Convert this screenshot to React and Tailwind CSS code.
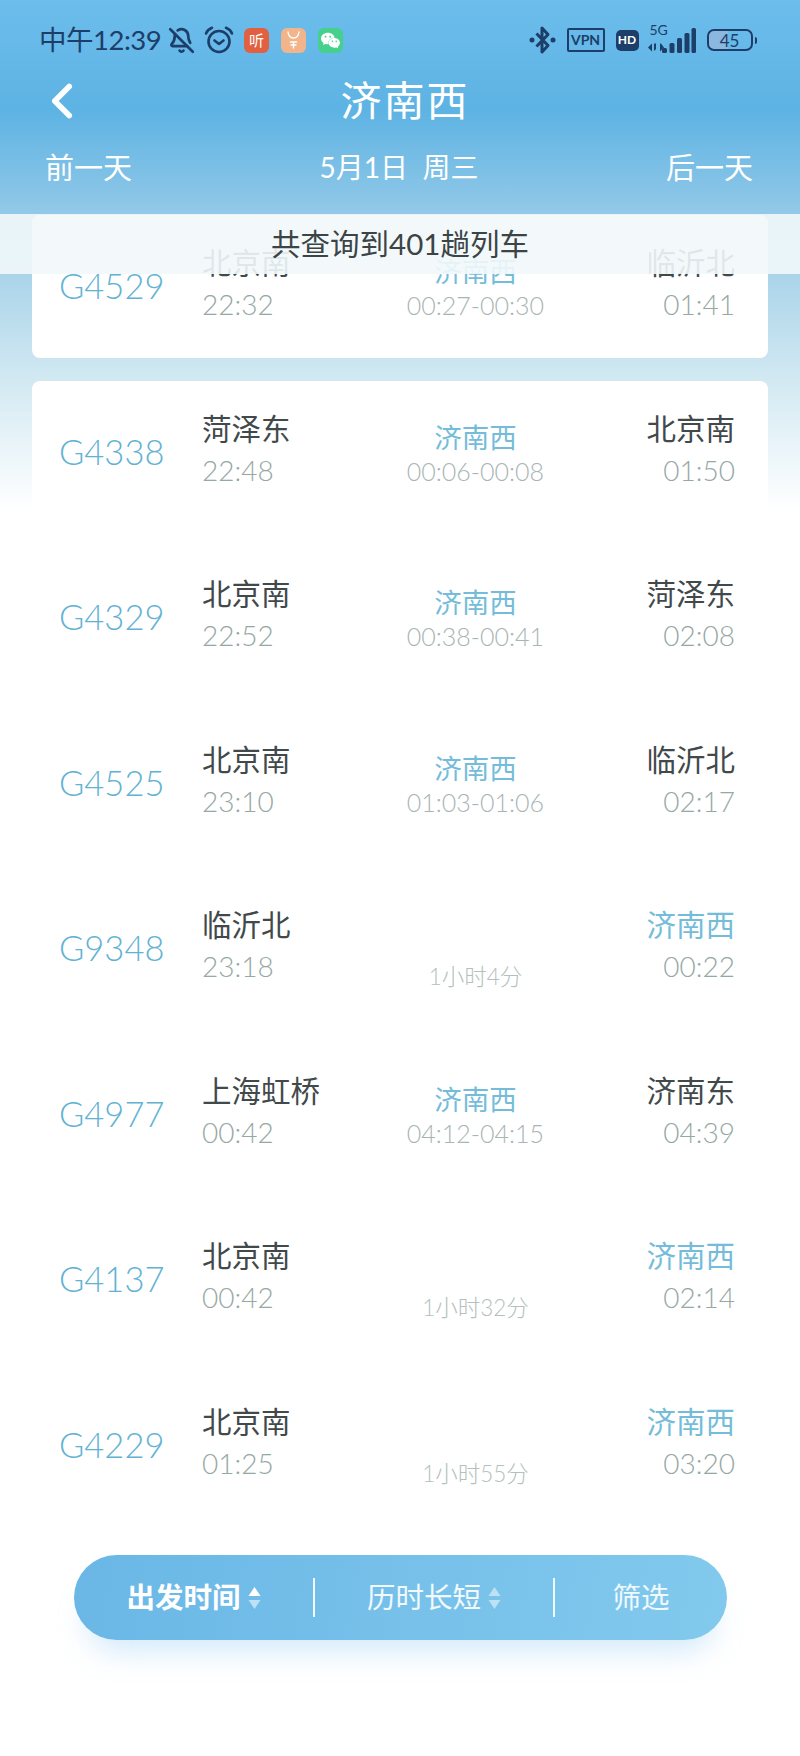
import React from 'react';
import { BellOff, ChevronLeft } from 'lucide-react';
import { SiWechat } from 'react-icons/si';

const trains = [
  { no: 'G4529', from: '北京南', dep: '22:32', via: '济南西', stop: '00:27-00:30', to: '临沂北', arr: '01:41' },
  { no: 'G4338', from: '菏泽东', dep: '22:48', via: '济南西', stop: '00:06-00:08', to: '北京南', arr: '01:50' },
  { no: 'G4329', from: '北京南', dep: '22:52', via: '济南西', stop: '00:38-00:41', to: '菏泽东', arr: '02:08' },
  { no: 'G4525', from: '北京南', dep: '23:10', via: '济南西', stop: '01:03-01:06', to: '临沂北', arr: '02:17' },
  { no: 'G9348', from: '临沂北', dep: '23:18', duration: '1小时4分', to: '济南西', arr: '00:22', end: true },
  { no: 'G4977', from: '上海虹桥', dep: '00:42', via: '济南西', stop: '04:12-04:15', to: '济南东', arr: '04:39' },
  { no: 'G4137', from: '北京南', dep: '00:42', duration: '1小时32分', to: '济南西', arr: '02:14', end: true },
  { no: 'G4229', from: '北京南', dep: '01:25', duration: '1小时55分', to: '济南西', arr: '03:20', end: true },
];

function AlarmIcon() {
  return (
    <svg width="30" height="28" viewBox="0 0 30 28" fill="none" stroke="#1d3e68" strokeWidth="2.6" strokeLinecap="round" strokeLinejoin="round">
      <circle cx="15" cy="15.5" r="10.5" />
      <path d="M10.5 14.5 15 18l4.500-3.500" />
      <path d="M2 7.500C3.200 4.500 5 3 8 1.800" />
      <path d="M28 7.500C26.800 4.500 25 3 22 1.800" />
    </svg>
  );
}

function BluetoothIcon() {
  return (
    <svg width="27" height="30" viewBox="0 0 27 30" fill="#1d3e68">
      <path d="M7.500 8.500 19 20.500 13 27V3l6 6.500L7.500 21.500" fill="none" stroke="#1d3e68" strokeWidth="3" strokeLinejoin="round" />
      <circle cx="3" cy="15" r="2.500" />
      <circle cx="24" cy="15" r="2.500" />
    </svg>
  );
}

function SignalIcon() {
  return (
    <svg width="50" height="30" viewBox="0 0 50 30" fill="#1d3e68">
      <path d="M1 22.500 5 18.500V26.500zM7 18.500h2V24l3-3-5 5zM14 18.500l-1 0v8l4-4z" />
      <rect x="15" y="23" width="5" height="5" rx="1.500" />
      <rect x="22.500" y="18" width="5" height="10" rx="1.500" />
      <rect x="30" y="13" width="5" height="15" rx="1.500" />
      <rect x="37.500" y="8" width="5" height="20" rx="1.500" />
      <rect x="44.500" y="3" width="4.500" height="25" rx="1.500" />
    </svg>
  );
}

function SortArrows({ dim }) {
  return (
    <svg width="13" height="24" viewBox="0 0 13 24" className={dim ? 'opacity-50' : ''}>
      <path d="M6.500 1 12.500 10H.5z" fill="#fff" />
      <path d="M6.500 23 .5 14h12z" fill="#fff" fillOpacity={dim ? 1 : 0.55} />
    </svg>
  );
}

function StatusBar() {
  return (
    <div className="flex h-[80px] items-center pl-[39px] pr-[43px] text-[#1d3e68]">
      <span className="w-[129px] text-[27.500px] leading-none tracking-[-0.5px]">中午12:39</span>
      <BellOff size={27} strokeWidth={2.4} className="mr-[9px]" />
      <AlarmIcon />
      <div className="ml-[10px] flex h-[25px] w-[25px] items-center justify-center rounded-[6px] bg-[#e2603f] text-[15px] leading-none text-white">听</div>
      <div className="ml-[12px] flex h-[25px] w-[25px] flex-col items-center rounded-[6px] bg-[#f2b48a] pt-[3px]">
        <svg width="15" height="18" viewBox="0 0 15 18" fill="none" stroke="#fff" strokeWidth="1.4" strokeLinecap="round">
          <path d="M2 1c.5 4 2.500 6 5.500 6S12.500 5 13 1" />
          <path d="M4.500 11h6M5 14h5M7.500 11v6" />
        </svg>
      </div>
      <div className="ml-[12px] flex h-[25px] w-[25px] items-center justify-center rounded-[6px] bg-[#45d08b] text-white">
        <SiWechat size={19} />
      </div>
      <div className="ml-auto flex items-center">
        <BluetoothIcon />
        <div className="ml-[11px] flex h-[24px] w-[38px] items-center justify-center rounded-[2px] border-[2.5px] border-[#1d3e68] text-[14px] font-bold leading-none">VPN</div>
        <div className="ml-[11px] flex h-[21px] w-[23px] items-center justify-center rounded-[5px] bg-[#1d3e68] text-[12px] font-bold leading-none text-white">HD</div>
        <div className="relative ml-[8px] h-[30px] w-[50px]">
          <SignalIcon />
          <span className="absolute left-[3px] top-[-2px] text-[14px] leading-none">5G</span>
        </div>
        <div className="ml-[10px] flex h-[22px] w-[46px] items-center justify-center rounded-[7px] border-[2.5px] border-[#1d3e68] bg-[linear-gradient(90deg,#8ab8de_0%,#8ab8de_45%,transparent_45%)] text-[17px] leading-none">45</div>
        <div className="ml-[2px] h-[7px] w-[2.500px] rounded-r-sm bg-[#1d3e68]" />
      </div>
    </div>
  );
}

function TrainCard({ train }) {
  return (
    <div className="grid h-[142.5px] grid-cols-[143px_173px_201px_159px] items-center rounded-lg bg-white pl-[27px]">
      <div className="text-[34.500px] font-light leading-none text-[#62b2d3]">{train.no}</div>
      <div className="-mt-[5px]">
        <div className="text-[29.500px] leading-[36px] text-[#41494b]">{train.from}</div>
        <div className="mt-[5px] text-[28px] font-light leading-[36px] text-[#96a8a5]">{train.dep}</div>
      </div>
      <div className="-mt-[10px] flex flex-col items-center">
        {train.via ? (
          <>
            <div className="mt-[14px] text-[27.500px] leading-[34px] text-[#74bcd9]">{train.via}</div>
            <div className="text-[25px] font-light leading-[32px] text-[#a8b5b4]">{train.stop}</div>
          </>
        ) : (
          <div className="mt-[68px] text-[22.500px] font-light leading-[30px] text-[#b4bfbe]">{train.duration}</div>
        )}
      </div>
      <div className="-mt-[5px] text-right">
        <div className={`text-[29.500px] leading-[36px] ${train.end ? 'text-[#74bcd9]' : 'text-[#41494b]'}`}>{train.to}</div>
        <div className="mt-[5px] text-[28px] font-light leading-[36px] text-[#96a8a5]">{train.arr}</div>
      </div>
    </div>
  );
}

export default function App() {
  return (
    <div className="relative h-[1756px] w-[800px] overflow-hidden bg-[linear-gradient(180deg,#6cbdec_0px,#5db3e3_110px,#93c9e8_214px,#b4d9ec_300px,#d2e9f2_380px,#ffffff_510px)] font-['Lato','Noto_Sans_CJK_SC',sans-serif]">
      <StatusBar />

      <div className="grid h-[40px] grid-cols-[1fr_auto_1fr] items-center pl-[35px] pr-[25px] text-white">
        <ChevronLeft size={58} strokeWidth={2.300} className="-my-[9px] -ml-[2px]" />
        <h1 className="text-[41px] font-normal leading-none tracking-[2px]">济南西</h1>
        <div />
      </div>

      <div className="mt-[27px] flex h-[40px] items-center justify-between pl-[45px] pr-[47px] text-[29px] leading-none text-white">
        <span>前一天</span>
        <span className="whitespace-pre text-[28px]">5月1日  周三</span>
        <span>后一天</span>
      </div>

      <div className="mt-[28px] flex flex-col gap-[23px] px-[32px]">
        {trains.map((train) => (
          <TrainCard key={train.no} train={train} />
        ))}
      </div>

      <div className="absolute left-0 right-0 top-[214px] flex h-[60px] items-center justify-center bg-[#f2f8fb]/90 text-[29.500px] leading-none text-[#3c4446]">
        共查询到401趟列车
      </div>

      <div className="absolute left-[74px] top-[1555px] grid h-[85px] w-[653px] grid-cols-[241px_240px_1fr] items-center rounded-full bg-[linear-gradient(100deg,#6ab7e6,#82c9ed)] text-[28.500px] leading-none text-white shadow-[0_24px_30px_-14px_rgba(120,190,240,0.35)]">
        <div className="flex h-[39px] items-center justify-center gap-[7px] border-r-2 border-white/90 font-bold">
          出发时间
          <SortArrows />
        </div>
        <div className="flex h-[39px] items-center justify-center gap-[7px] border-r-2 border-white/90 text-white/90">
          历时长短
          <SortArrows dim />
        </div>
        <div className="text-center text-white/90">筛选</div>
      </div>
    </div>
  );
}
